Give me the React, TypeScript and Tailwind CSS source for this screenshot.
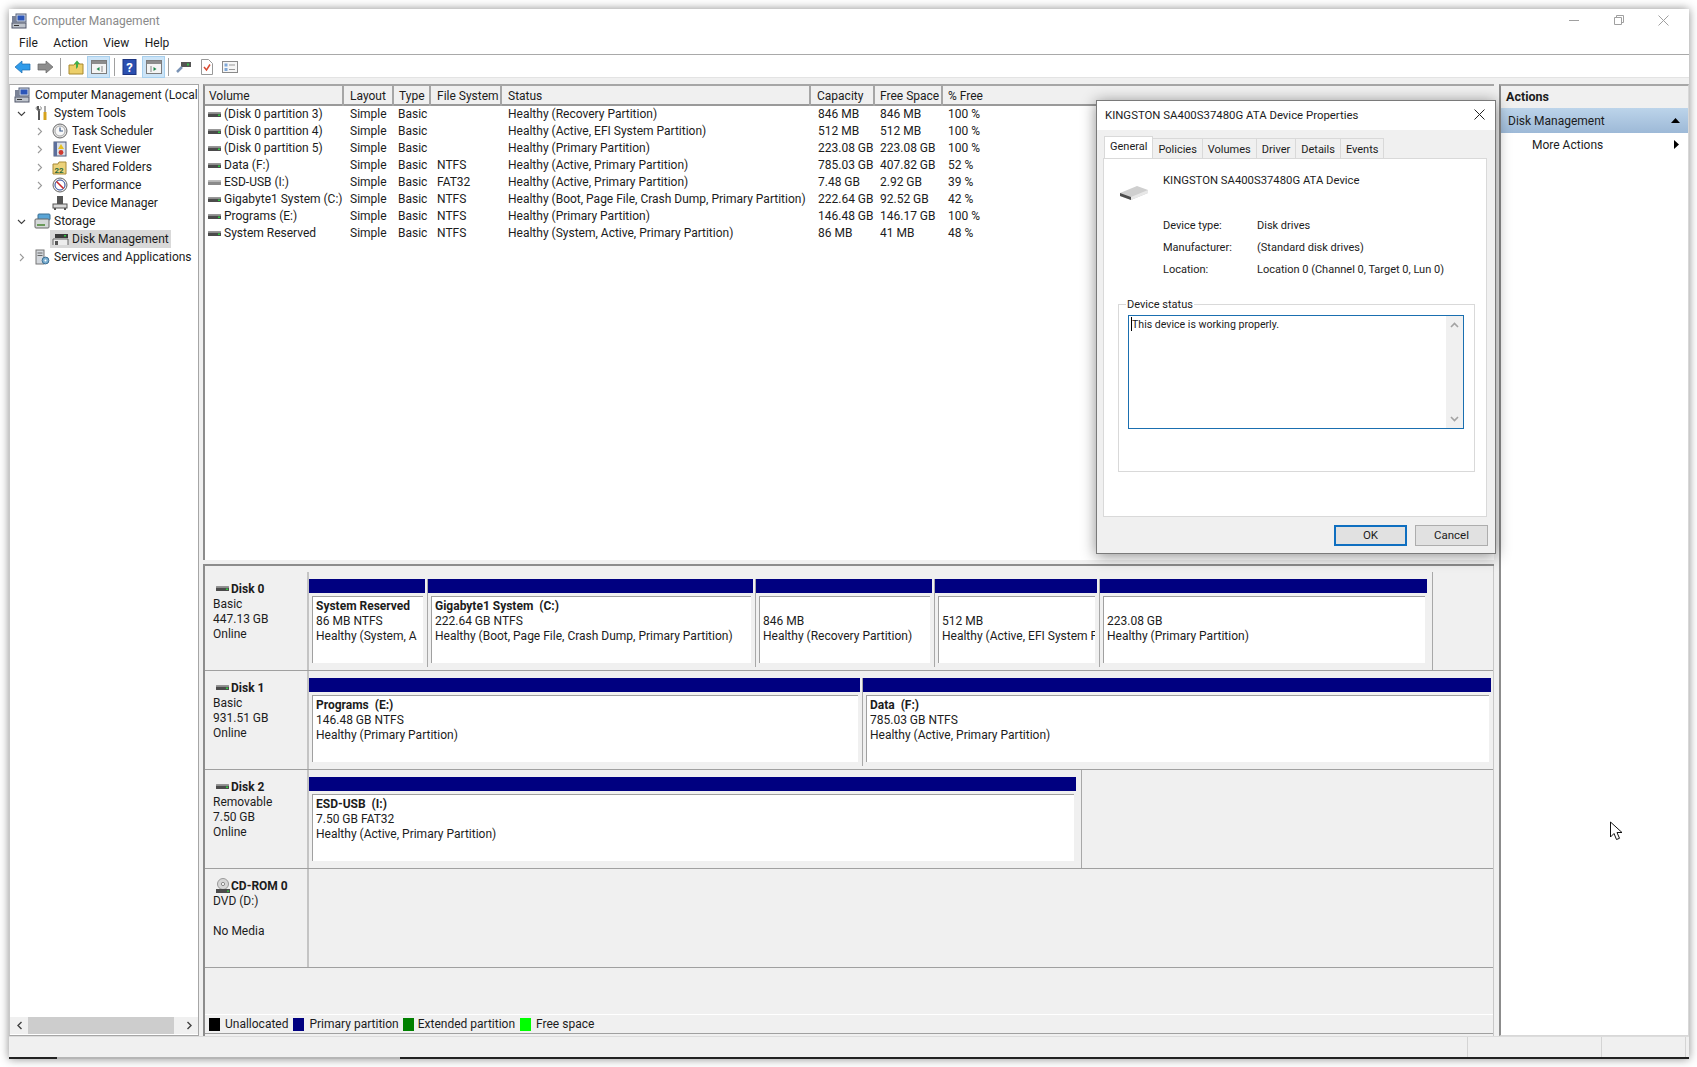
import { ReactNode } from "react";

// small drawn icons
function DiskIcon({ grey = false }: { grey?: boolean }) {
  return (
    <svg width="14" height="6" viewBox="0 0 14 6" className="shrink-0">
      <rect x="0" y="0.5" width="13" height="4.5" rx="0.5" fill={grey ? "#8a8a8a" : "#4b4b4b"} />
      <rect x="0" y="0.5" width="13" height="1.5" fill={grey ? "#b5b5b5" : "#8c8c8c"} />
      {!grey && <rect x="10" y="2.5" width="2" height="1.5" fill="#2ecc40" />}
    </svg>
  );
}

function Ico({ children, w = 16, h = 16 }: { children: ReactNode; w?: number; h?: number }) {
  return (
    <svg width={w} height={h} viewBox={`0 0 ${w} ${h}`} className="shrink-0">
      {children}
    </svg>
  );
}

const ComputerIcon = () => (
  <Ico>
    <rect x="5" y="1" width="10" height="8" fill="#d5dbe6" stroke="#55607a" />
    <rect x="6.5" y="2.5" width="7" height="5" fill="#2b55b8" />
    <rect x="1" y="10" width="14" height="5" fill="#bfc4cc" stroke="#50566a" />
    <rect x="3" y="12" width="5" height="1" fill="#333" />
    <rect x="1" y="3" width="4" height="7" fill="#7a8296" />
  </Ico>
);
const ToolsIcon = () => (
  <Ico>
    <path d="M4 1v3l1 1v10" stroke="#555" strokeWidth="2" fill="none" />
    <path d="M3 1.5C1.5 3 2 5 4.5 5.5S8 3 6.5 1.5" stroke="#777" fill="none" />
    <path d="M11 1v6" stroke="#aaa" strokeWidth="2" />
    <path d="M11 7v8" stroke="#d6a21c" strokeWidth="3" />
  </Ico>
);
const ClockIcon = () => (
  <Ico>
    <circle cx="8" cy="8" r="7" fill="#e4e4e4" stroke="#6a6a6a" />
    <circle cx="8" cy="8" r="5" fill="#f8f8f8" stroke="#aaa" />
    <path d="M8 4.5V8h3" stroke="#3a5a8a" strokeWidth="1.2" fill="none" />
  </Ico>
);
const EventIcon = () => (
  <Ico>
    <rect x="2" y="1" width="12" height="14" fill="#d9dfe9" stroke="#4e5a78" />
    <rect x="2" y="1" width="3" height="14" fill="#5c6f9c" />
    <path d="M9 3l3 5H6z" fill="#e8c020" />
    <circle cx="9" cy="11.5" r="2.4" fill="#d03a2e" />
  </Ico>
);
const SharedIcon = () => (
  <Ico>
    <path d="M1 5h5l1-2h7v12H1z" fill="#ecd27a" stroke="#a88a36" />
    <text x="2.5" y="14" fontSize="8" fontWeight="700" fill="#2d6a3a" fontFamily="Roboto, sans-serif">22</text>
  </Ico>
);
const PerfIcon = () => (
  <Ico>
    <circle cx="8" cy="8" r="7" fill="#eee" stroke="#666" />
    <circle cx="8" cy="8" r="5" fill="#fff" stroke="#2b4aa0" />
    <path d="M4.5 4.5l7 7" stroke="#cc2a2a" strokeWidth="1.6" />
  </Ico>
);
const DeviceIcon = () => (
  <Ico>
    <rect x="5" y="1" width="6" height="8" fill="#555" />
    <rect x="1" y="9" width="14" height="4" fill="#d8d8d8" stroke="#555" />
    <path d="M3 13v2M13 13v2" stroke="#555" strokeWidth="2" />
  </Ico>
);
const StorageIcon = () => (
  <Ico w={17}>
    <rect x="4" y="1" width="12" height="6" rx="1" fill="#5aa5d6" stroke="#3b6f92" />
    <rect x="1" y="6" width="14" height="9" rx="1" fill="#d4d8d8" stroke="#666" />
    <rect x="3" y="11" width="8" height="2" fill="#6a9a5a" />
  </Ico>
);
const DiskMgmtIcon = () => (
  <Ico w={17}>
    <rect x="3" y="3" width="13" height="4" fill="#3b3b3b" />
    <rect x="12" y="4" width="2" height="1.5" fill="#2ecc40" />
    <path d="M1 14V8h15v6" fill="#ededed" stroke="#666" />
    <rect x="3" y="10" width="3" height="4" fill="#555" />
  </Ico>
);
const ServicesIcon = () => (
  <Ico>
    <rect x="2" y="1" width="8" height="14" fill="#d4d8dd" stroke="#777" />
    <path d="M3.5 4h5M3.5 6.5h5" stroke="#666" />
    <circle cx="11.5" cy="11.5" r="3.4" fill="#7aaed0" stroke="#3d6f95" />
    <circle cx="11.5" cy="11.5" r="1" fill="#fff" />
  </Ico>
);

function Chevron({ dir }: { dir: "right" | "down" }) {
  return (
    <svg width="9" height="9" viewBox="0 0 9 9" className="shrink-0">
      <path
        d={dir === "right" ? "M3 1l3.5 3.5L3 8" : "M1 3l3.5 3.5L8 3"}
        fill="none"
        stroke={dir === "right" ? "#9a9a9a" : "#404040"}
        strokeWidth="1.1"
      />
    </svg>
  );
}

function ToolBtn({ active, children }: { active?: boolean; children: ReactNode }) {
  return (
    <div
      className={
        active
          ? "w-[23px] h-[22px] flex items-center justify-center bg-[#cce4f7] border border-[#a8d0ee]"
          : "w-[23px] h-[22px] flex items-center justify-center"
      }
    >
      {children}
    </div>
  );
}

const ToolSep = () => <div className="w-px h-[18px] bg-[#a0a0a0] mx-[3px]" />;

const PaneIcon = ({ flip }: { flip?: boolean }) => (
  <Ico w={16} h={14}>
    <rect x="0.5" y="0.5" width="15" height="13" fill="#f4f4f4" stroke="#7c7c7c" />
    <rect x="1" y="1" width="14" height="3" fill="#8c8c8c" />
    <path d={flip ? "M5 6v6" : "M11 6v6"} stroke="#888" />
    <path d={flip ? "M7.5 7l3 2-3 2z" : "M8.5 7l-3 2 3 2z"} fill="#1f8a4c" />
  </Ico>
);

// tree
function TreeRow({
  pad,
  chev,
  icon,
  label,
  selected,
}: {
  pad: string;
  chev?: "right" | "down";
  icon: ReactNode;
  label: string;
  selected?: boolean;
}) {
  return (
    <div className={`flex items-center h-[18px] whitespace-nowrap ${pad}`}>
      <div className="w-[9px] mr-[8px] flex justify-center">{chev && <Chevron dir={chev} />}</div>
      <div className={selected ? "flex items-center bg-[#d9d9d9] h-[18px] pl-[2px] pr-[2px] -ml-[2px]" : "flex items-center"}>
        <div className="w-[20px]">{icon}</div>
        <span>{label}</span>
      </div>
    </div>
  );
}

// volume list
const cols = "grid grid-cols-[139px_50px_37px_71px_309px_64px_68px_1fr]";
const headers = ["Volume", "Layout", "Type", "File System", "Status", "Capacity", "Free Space", "% Free"];
const volumes = [
  ["(Disk 0 partition 3)", "", "Healthy (Recovery Partition)", "846 MB", "846 MB", "100 %"],
  ["(Disk 0 partition 4)", "", "Healthy (Active, EFI System Partition)", "512 MB", "512 MB", "100 %"],
  ["(Disk 0 partition 5)", "", "Healthy (Primary Partition)", "223.08 GB", "223.08 GB", "100 %"],
  ["Data (F:)", "NTFS", "Healthy (Active, Primary Partition)", "785.03 GB", "407.82 GB", "52 %"],
  ["ESD-USB (I:)", "FAT32", "Healthy (Active, Primary Partition)", "7.48 GB", "2.92 GB", "39 %"],
  ["Gigabyte1 System (C:)", "NTFS", "Healthy (Boot, Page File, Crash Dump, Primary Partition)", "222.64 GB", "92.52 GB", "42 %"],
  ["Programs (E:)", "NTFS", "Healthy (Primary Partition)", "146.48 GB", "146.17 GB", "100 %"],
  ["System Reserved", "NTFS", "Healthy (System, Active, Primary Partition)", "86 MB", "41 MB", "48 %"],
];

// disk map
type Part = { w: number; name?: string; size: string; status: string };

function Partition({ p }: { p: Part }) {
  return (
    <div className="flex flex-col shrink-0 border-r border-[#a8a8a8] last:border-r-0 pr-[2px]" style={{ width: p.w }}>
      <div className="h-[14px] bg-[#000080] shrink-0" />
      <div className="flex-1 bg-[#f0f0f0] pt-[3px] pl-[3px] pr-[2px] pb-[4px] flex">
        <div className="flex-1 bg-white border-l border-t border-[#a0a0a0] pl-[3px] pt-[2px] overflow-hidden whitespace-nowrap leading-[15px]">
          <div className="font-bold h-[15px] whitespace-pre">{p.name}</div>
          <div>{p.size}</div>
          <div>{p.status}</div>
        </div>
      </div>
    </div>
  );
}

function DiskRow({
  name,
  lines,
  parts,
  width,
  cd,
  full,
}: {
  name: string;
  lines: string[];
  parts: Part[];
  width?: number;
  cd?: boolean;
  full?: boolean;
}) {
  return (
    <div className="flex h-[99px] shrink-0 border-b border-[#a0a0a0]">
      <div className="w-[104px] shrink-0 border-r-2 border-[#c4c4c4] pl-[8px] pt-[9px] leading-[15px]">
        <div className="flex items-center h-[16px] font-bold">
          {cd ? (
            <svg width="18" height="16" viewBox="0 0 18 16" className="shrink-0">
              <circle cx="10" cy="6" r="5.5" fill="#d6d6d6" stroke="#999" />
              <circle cx="10" cy="6" r="1.6" fill="#fff" stroke="#888" />
              <rect x="3" y="11" width="14" height="4" fill="#4b4b4b" />
              <rect x="14" y="12.5" width="2" height="1.3" fill="#2ecc40" />
            </svg>
          ) : (
            <div className="pl-[3px] w-[18px]">
              <DiskIcon />
            </div>
          )}
          <span>{name}</span>
        </div>
        {lines.map((l, i) => (
          <div key={i} className="h-[15px]">
            {l}
          </div>
        ))}
      </div>
      {parts.length > 0 && (
        <div
          className={
            full
              ? "flex pt-[7px] pb-[3px]"
              : "flex pt-[7px] pb-[3px] pr-[3px] border-r border-[#a8a8a8]"
          }
          style={{ width }}
        >
          {parts.map((p, i) => (
            <Partition key={i} p={p} />
          ))}
        </div>
      )}
    </div>
  );
}

function Tab({ label, active }: { label: string; active?: boolean }) {
  return (
    <div
      className={
        active
          ? "h-[22px] px-[5px] bg-white border border-b-0 border-[#d9d9d9] leading-[19px] -mb-px relative z-10"
          : "h-[20px] px-[5px] mt-[2px] bg-[#f0f0f0] border border-b-0 border-l-0 border-[#d9d9d9] leading-[21px]"
      }
    >
      {label}
    </div>
  );
}

export default function App() {
  return (
    <div className="w-[1697px] h-[1067px] bg-white pl-[9px] pt-[9px] overflow-hidden font-[Roboto,sans-serif] text-[12px] text-[#1c1c1c] relative">
      <div className="w-[1680px] h-[1050px] bg-[#f0f0f0] flex flex-col shadow-[0_0_9px_rgba(0,0,0,0.45)] relative">
        {/* Title bar */}
        <div className="h-[24px] bg-white flex items-center pl-[2px] shrink-0">
          <div className="w-[22px]">
            <ComputerIcon />
          </div>
          <span className="text-[#8a8a8a] text-[12px]">Computer Management</span>
          <div className="ml-auto flex items-center pr-[3px] pb-[2px]">
            <div className="w-[45px] flex justify-center">
              <div className="w-[10px] h-px bg-[#a0a0a0]" />
            </div>
            <div className="w-[45px] flex justify-center">
              <svg width="10" height="10" viewBox="0 0 10 10">
                <path d="M2.5 2.5V.5h7v7h-2M.5 2.5h7v7h-7z" fill="none" stroke="#a0a0a0" />
              </svg>
            </div>
            <div className="w-[45px] flex justify-center">
              <svg width="11" height="11" viewBox="0 0 11 11">
                <path d="M.5.5l10 10M10.5.5l-10 10" stroke="#a0a0a0" />
              </svg>
            </div>
          </div>
        </div>

        {/* Menu bar */}
        <div className="h-[22px] bg-white border-b border-[#a9a9a9] flex items-center pl-[10px] gap-[15.5px] shrink-0 pb-[1px]">
          <span>File</span>
          <span>Action</span>
          <span>View</span>
          <span>Help</span>
        </div>

        {/* Toolbar */}
        <div className="h-[23px] bg-white border-b border-[#e3e3e3] flex items-center pl-[2px] pt-[2px] shrink-0">
          <ToolBtn>
            <svg width="17" height="14" viewBox="0 0 17 14">
              <path d="M1 7l7-6v3h8v6H8v3z" fill="#2f9bea" stroke="#1a6cb0" strokeWidth="0.7" />
            </svg>
          </ToolBtn>
          <ToolBtn>
            <svg width="17" height="14" viewBox="0 0 17 14">
              <path d="M16 7L9 1v3H1v6h8v3z" fill="#8d8d8d" stroke="#666" strokeWidth="0.7" />
            </svg>
          </ToolBtn>
          <ToolSep />
          <ToolBtn>
            <svg width="16" height="15" viewBox="0 0 16 15">
              <path d="M1 5h5l1-1h8v10H1z" fill="#eccf6a" stroke="#a8892f" />
              <path d="M8 9V4H6l3-3.5L12 4h-2v3z" fill="#3fae49" />
            </svg>
          </ToolBtn>
          <ToolBtn active>
            <PaneIcon />
          </ToolBtn>
          <div className="w-px h-[18px] bg-[#a0a0a0] ml-[4px] mr-[3px]" />
          <ToolBtn>
            <svg width="15" height="16" viewBox="0 0 15 16">
              <rect x="1" y="0.5" width="13" height="15" fill="#2a4fb0" stroke="#1c3480" />
              <text x="7.5" y="13" textAnchor="middle" fontSize="13" fontWeight="700" fill="#fff" fontFamily="Roboto, sans-serif">?</text>
            </svg>
          </ToolBtn>
          <div className="w-px" />
          <ToolBtn active>
            <PaneIcon flip />
          </ToolBtn>
          <ToolSep />
          <ToolBtn>
            <svg width="17" height="14" viewBox="0 0 17 14">
              <rect x="6" y="2" width="10" height="5" fill="#555" />
              <rect x="12" y="3.5" width="2" height="2" fill="#39c24a" />
              <path d="M7 7L2 12" stroke="#7a93b5" strokeWidth="2.5" />
            </svg>
          </ToolBtn>
          <ToolBtn>
            <svg width="12" height="16" viewBox="0 0 12 16">
              <path d="M.5.5h7l4 4v11H.5z" fill="#fff" stroke="#999" />
              <path d="M3 8l2.5 3L9 5.5" stroke="#d9482f" strokeWidth="1.5" fill="none" />
            </svg>
          </ToolBtn>
          <ToolBtn>
            <svg width="16" height="12" viewBox="0 0 16 12">
              <rect x="0.5" y="0.5" width="15" height="11" fill="#f6f6f6" stroke="#8a8a8a" />
              <rect x="2.5" y="2.5" width="3" height="3" fill="#7fa7d8" />
              <rect x="2.5" y="7" width="3" height="3" fill="#7fa7d8" />
              <path d="M7 4h6M7 8.5h6" stroke="#999" />
            </svg>
          </ToolBtn>
        </div>

        {/* Panes */}
        <div className="h-[958px] flex pt-[6px] gap-[4px] shrink-0">
          {/* Tree */}
          <div className="w-[190px] shrink-0 bg-white border border-[#a6a6a6] border-l-[#c8c8c8] flex flex-col pt-[1px] pb-px overflow-hidden">
            <div className="flex-1 overflow-hidden">
              <div className="flex items-center h-[18px] pl-[4px] whitespace-nowrap overflow-hidden">
                <div className="w-[21px]">
                  <ComputerIcon />
                </div>
                <span>Computer Management (Local</span>
              </div>
              <TreeRow pad="pl-[7px]" chev="down" icon={<ToolsIcon />} label="System Tools" />
              <TreeRow pad="pl-[25px]" chev="right" icon={<ClockIcon />} label="Task Scheduler" />
              <TreeRow pad="pl-[25px]" chev="right" icon={<EventIcon />} label="Event Viewer" />
              <TreeRow pad="pl-[25px]" chev="right" icon={<SharedIcon />} label="Shared Folders" />
              <TreeRow pad="pl-[25px]" chev="right" icon={<PerfIcon />} label="Performance" />
              <TreeRow pad="pl-[25px]" icon={<DeviceIcon />} label="Device Manager" />
              <TreeRow pad="pl-[7px]" chev="down" icon={<StorageIcon />} label="Storage" />
              <TreeRow pad="pl-[25px]" icon={<DiskMgmtIcon />} label="Disk Management" selected />
              <TreeRow pad="pl-[7px]" chev="right" icon={<ServicesIcon />} label="Services and Applications" />
            </div>
            <div className="h-[17px] bg-[#f0f0f0] flex items-center shrink-0">
              <div className="w-[18px] flex justify-center">
                <svg width="7" height="9" viewBox="0 0 7 9">
                  <path d="M5.5 1L2 4.5 5.5 8" fill="none" stroke="#404040" strokeWidth="1.4" />
                </svg>
              </div>
              <div className="w-[146px] h-[17px] bg-[#cdcdcd]" />
              <div className="flex-1 flex justify-end pr-[5px]">
                <svg width="7" height="9" viewBox="0 0 7 9">
                  <path d="M1.5 1L5 4.5 1.5 8" fill="none" stroke="#404040" strokeWidth="1.4" />
                </svg>
              </div>
            </div>
          </div>

          {/* Volume list and disk map */}
          <div className="w-[1291px] shrink-0 flex flex-col">
            <div className="h-[476px] bg-white border-2 border-b-0 border-[#a6a6a6] border-l-[#8c8c8c] border-r-0 shrink-0 overflow-hidden">
              <div className={`${cols} h-[20px] bg-[#f0f0f0] border-b-2 border-[#9a9a9a]`}>
                {headers.map((h, i) => (
                  <div
                    key={h}
                    className={
                      i === 0
                        ? "pl-[4px] leading-[20px] border-r-2 border-[#a6a6a6] whitespace-nowrap"
                        : i === 2 || i === 6 || i === 7
                          ? "pl-[5px] leading-[20px] border-r-2 border-[#a6a6a6] last:border-r-0 whitespace-nowrap"
                          : "pl-[6px] leading-[20px] border-r-2 border-[#a6a6a6] whitespace-nowrap"
                    }
                  >
                    {h}
                  </div>
                ))}
              </div>
              {volumes.map((v) => (
                <div key={v[0]} className={`${cols} h-[17px] leading-[17px] whitespace-nowrap`}>
                  <div className="flex items-center pl-[3px] gap-[2px]">
                    <DiskIcon grey={v[0].startsWith("ESD")} />
                    <span>{v[0]}</span>
                  </div>
                  <div className="pl-[6px]">Simple</div>
                  <div className="pl-[4px]">Basic</div>
                  <div className="pl-[6px]">{v[1]}</div>
                  <div className="pl-[6px]">{v[2]}</div>
                  <div className="pl-[7px]">{v[3]}</div>
                  <div className="pl-[5px]">{v[4]}</div>
                  <div className="pl-[5px]">{v[5]}</div>
                </div>
              ))}
            </div>
            {/* splitter */}
            <div className="h-[6px] bg-[#f0f0f0] border-b-2 border-[#8c8c8c] shrink-0" />
            <div className="flex-1 flex flex-col border-l-2 border-[#8c8c8c] border-r border-r-[#c8c8c8] overflow-hidden">
              <div className="flex-1 pt-[6px] flex flex-col">
                <DiskRow
                  name="Disk 0"
                  lines={["Basic", "447.13 GB", "Online"]}
                  width={1124}
                  parts={[
                    { w: 119, name: "System Reserved", size: "86 MB NTFS", status: "Healthy (System, A" },
                    { w: 328, name: "Gigabyte1 System  (C:)", size: "222.64 GB NTFS", status: "Healthy (Boot, Page File, Crash Dump, Primary Partition)" },
                    { w: 179, size: "846 MB", status: "Healthy (Recovery Partition)" },
                    { w: 165, size: "512 MB", status: "Healthy (Active, EFI System P" },
                    { w: 329, size: "223.08 GB", status: "Healthy (Primary Partition)" },
                  ]}
                />
                <DiskRow
                  name="Disk 1"
                  lines={["Basic", "931.51 GB", "Online"]}
                  width={1184}
                  full
                  parts={[
                    { w: 554, name: "Programs  (E:)", size: "146.48 GB NTFS", status: "Healthy (Primary Partition)" },
                    { w: 630, name: "Data  (F:)", size: "785.03 GB NTFS", status: "Healthy (Active, Primary Partition)" },
                  ]}
                />
                <DiskRow
                  name="Disk 2"
                  lines={["Removable", "7.50 GB", "Online"]}
                  width={773}
                  parts={[{ w: 769, name: "ESD-USB  (I:)", size: "7.50 GB FAT32", status: "Healthy (Active, Primary Partition)" }]}
                />
                <DiskRow name="CD-ROM 0" lines={["DVD (D:)", "", "No Media"]} parts={[]} cd />
              </div>
              {/* legend */}
              <div className="h-[20px] mb-[2px] shrink-0 border-t border-white border-b border-b-[#a0a0a0] flex items-center pl-[4px]">
                <div className="w-[11px] h-[13px] bg-black mr-[5px]" />
                <span className="mr-[5px]">Unallocated</span>
                <div className="w-[11px] h-[13px] bg-[#000080] mr-[5px]" />
                <span className="mr-[4px]">Primary partition</span>
                <div className="w-[11px] h-[13px] bg-[#008000] mr-[4px]" />
                <span className="mr-[5px]">Extended partition</span>
                <div className="w-[11px] h-[13px] bg-[#00ff00] mr-[5px]" />
                <span>Free space</span>
              </div>
            </div>
          </div>

          {/* Actions */}
          <div className="w-[190px] shrink-0 ml-[1px] bg-white border-2 border-r border-b border-[#a6a6a6] border-l-[#8c8c8c] border-b-[#d8d8d8] border-r-[#d8d8d8] flex flex-col">
            <div className="h-[22px] bg-[#f0f0f0] font-bold flex items-center pl-[5px] text-[12.5px] shrink-0">Actions</div>
            <div className="h-[25px] bg-linear-to-b from-[#bcd4ea] to-[#9db9d7] flex items-center pl-[7px] pr-[8px] justify-between shrink-0">
              <span>Disk Management</span>
              <svg width="9" height="5" viewBox="0 0 9 5">
                <path d="M4.5 0L9 5H0z" fill="#000" />
              </svg>
            </div>
            <div className="h-[23px] flex items-center pl-[31px] pr-[9px] justify-between shrink-0">
              <span>More Actions</span>
              <svg width="5" height="9" viewBox="0 0 5 9">
                <path d="M0 0l5 4.5L0 9z" fill="#000" />
              </svg>
            </div>
          </div>
        </div>

        {/* Status bar */}
        <div className="flex-1 flex border-t border-[#dcdcdc] relative">
          <div className="w-[1459px] border-r border-[#d4d4d4]" />
          <div className="w-[134px] border-r border-[#d4d4d4]" />
          <div className="w-[84px] border-r border-[#d4d4d4]" />
          <div className="absolute left-0 right-0 bottom-0 h-[2px] flex">
            <div className="w-[48px] bg-[#222]" />
            <div className="w-[343px] bg-[#b5b5b5]" />
            <div className="flex-1 bg-[#222]" />
          </div>
        </div>
      </div>

      {/* Properties dialog */}
      <div className="absolute left-[1096px] top-[100px] w-[400px] h-[454px] bg-[#f0f0f0] border border-[#7a7a7a] shadow-[0_2px_14px_rgba(0,0,0,0.45)] flex flex-col text-[11px]">
        <div className="h-[29px] bg-white flex items-center justify-between pl-[8px] pr-[10px] shrink-0">
          <span className="text-[11.4px]">KINGSTON SA400S37480G ATA Device Properties</span>
          <svg width="11" height="11" viewBox="0 0 11 11" className="-mt-[2px]">
            <path d="M.5.5l10 10M10.5.5l-10 10" stroke="#222" />
          </svg>
        </div>
        <div className="px-[6px] pt-[6px] flex-1 flex flex-col">
          <div className="flex pl-px relative items-start">
            <Tab label="General" active />
            <Tab label="Policies" />
            <Tab label="Volumes" />
            <Tab label="Driver" />
            <Tab label="Details" />
            <Tab label="Events" />
          </div>
          <div className="h-[359px] w-[384px] bg-white border border-[#d9d9d9] pl-[14px] pr-[11px] pt-[14px]">
            <div className="flex h-[33px]">
              <div className="w-[45px] pt-[12px] pl-[1px]">
                <svg width="30" height="16" viewBox="0 0 30 16">
                  <path d="M1 8l17-7 11 4v3L12 15 1 11z" fill="#cfcfcf" />
                  <path d="M1 8l11 4v3L1 11z" fill="#4d4d4d" />
                  <path d="M12 12L29 5v3L12 15z" fill="#e8e8e8" />
                </svg>
              </div>
              <span className="leading-[16px] text-[11.3px]">KINGSTON SA400S37480G ATA Device</span>
            </div>
            <div className="pl-[45px] mt-[9px] flex flex-col">
              <div className="flex h-[22px] items-center">
                <span className="w-[94px]">Device type:</span>
                <span>Disk drives</span>
              </div>
              <div className="flex h-[22px] items-center">
                <span className="w-[94px]">Manufacturer:</span>
                <span>(Standard disk drives)</span>
              </div>
              <div className="flex h-[23px] items-center">
                <span className="w-[94px]">Location:</span>
                <span>Location 0 (Channel 0, Target 0, Lun 0)</span>
              </div>
            </div>
            <div className="relative mt-[22px] h-[168px] border border-[#d9d9d9] pt-[10px] pl-[9px] pr-[10px]">
              <span className="absolute left-[7px] -top-[8px] bg-white px-px leading-[16px]">Device status</span>
              <div className="h-[114px] border border-[#1a6fb0] flex">
                <div className="flex-1 pl-[2px] pt-[1px] leading-[16px] flex items-start">
                  <div className="w-px h-[14px] bg-black" />
                  <span className="text-[10.6px]">This device is working properly.</span>
                </div>
                <div className="w-[17px] bg-[#f0f0f0] flex flex-col justify-between items-center py-[6px]">
                  <svg width="9" height="6" viewBox="0 0 9 6">
                    <path d="M1 5l3.5-3.5L8 5" fill="none" stroke="#a3a3a3" strokeWidth="1.6" />
                  </svg>
                  <svg width="9" height="6" viewBox="0 0 9 6">
                    <path d="M1 1l3.5 3.5L8 1" fill="none" stroke="#a3a3a3" strokeWidth="1.6" />
                  </svg>
                </div>
              </div>
            </div>
          </div>
          <div className="flex justify-end gap-[8px] mt-[8px] pr-[1px] text-[11.5px]">
            <div className="w-[73px] h-[21px] bg-[#e1e1e1] border-2 border-[#0f6fc0] flex items-center justify-center">OK</div>
            <div className="w-[73px] h-[21px] bg-[#e1e1e1] border border-[#adadad] flex items-center justify-center">Cancel</div>
          </div>
        </div>
      </div>

      {/* Mouse pointer */}
      <svg className="absolute left-[1609px] top-[821px]" width="15" height="21" viewBox="0 0 15 21">
        <path d="M1.5 1v15l3.5-3.5 2.5 6 3-1.2-2.5-5.8h5z" fill="#fff" stroke="#111" strokeWidth="1" />
      </svg>
    </div>
  );
}
